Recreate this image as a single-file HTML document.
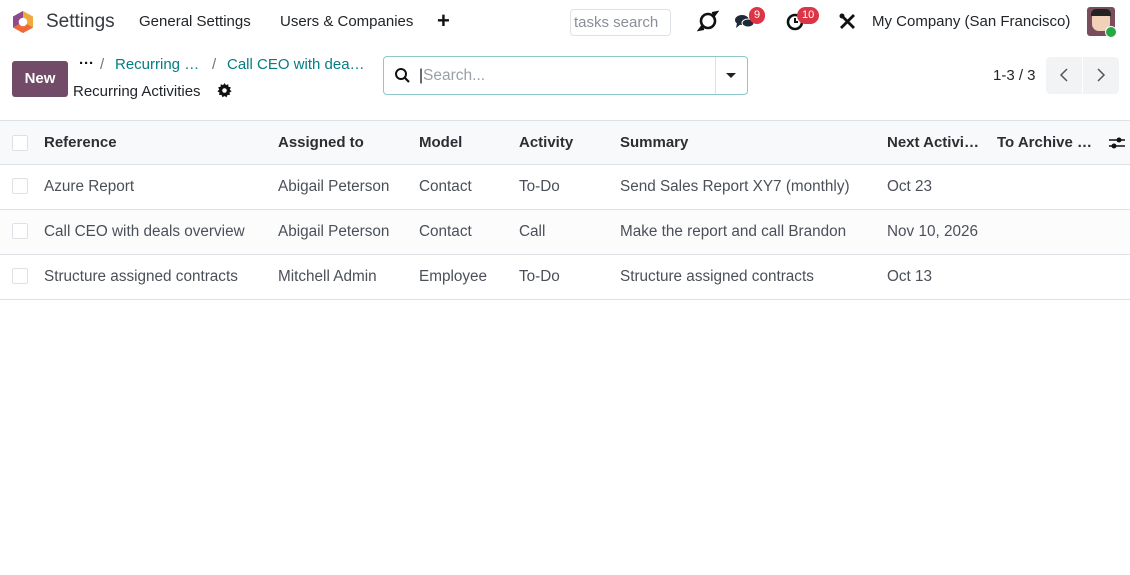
<!DOCTYPE html>
<html><head><meta charset="utf-8"><style>
*{box-sizing:border-box;margin:0;padding:0}
body{width:1130px;height:575px;background:#fff;font-family:"Liberation Sans",sans-serif;color:#374151;position:relative;overflow:hidden;font-size:15px}
.a{position:absolute;white-space:nowrap}
.nav{color:#212529;font-size:15px}
.badge{position:absolute;background:#dc3545;color:#fff;font-size:11px;border-radius:9px;height:17px;line-height:17px;text-align:center;padding:0 5px}
.hdr{position:absolute;left:0;top:120px;width:1130px;height:45px;background:#f8f9fa;border-top:1px solid #dee2e6;border-bottom:1px solid #dee2e6}
.row{position:absolute;left:0;width:1130px;height:45px;border-bottom:1px solid #dee2e6}
.cb{position:absolute;left:12px;width:16px;height:16px;border:1px solid #dee2e6;border-radius:2px;background:#fff}
.c{position:absolute;top:13px;white-space:nowrap;color:#4b5058;font-size:15.3px}
.h{font-weight:bold;color:#2b2f33;font-size:15px}
.teal{color:#017e84}
</style></head><body>
<svg class="a" style="left:11px;top:10px" width="24" height="24" viewBox="0 0 24 24"><polygon points="12,1 22,6.5 22,17.5 12,23 2,17.5 2,6.5" fill="#f0a93b"/><polygon points="12,1 2,6.5 2,17.5 12,12" fill="#8d4a8e"/><polygon points="2,17.5 12,23 22,17.5 12,12" fill="#ef6a3a"/><circle cx="12" cy="12" r="4.3" fill="#fff"/></svg>
<div class="a" style="left:46px;top:11px;font-size:19px;color:#343a40">Settings</div>
<div class="a nav" style="left:139px;top:13px">General Settings</div>
<div class="a nav" style="left:280px;top:13px">Users &amp; Companies</div>
<div class="a" style="left:437px;top:8px;font-size:22px;font-weight:bold;color:#111">+</div>
<div class="a" style="left:570px;top:9px;width:101px;height:27px;border:1px solid #dee2e6;border-radius:4px;color:#8a8f96;font-size:15px;padding:4px 3px">tasks search</div>
<svg class="a" style="left:697px;top:10px" width="22" height="22" viewBox="0 0 22 22"><circle cx="11" cy="11" r="7" fill="none" stroke="#111" stroke-width="2.6"/><path d="M15 3 L20 2 L17 6 M7 19 L2 20 L5 16" stroke="#111" stroke-width="2" fill="#111"/></svg>
<svg class="a" style="left:734px;top:13px" width="22" height="18" viewBox="0 0 22 18"><ellipse cx="8" cy="7" rx="7" ry="5" fill="#1f2937"/><path d="M3 10 L2 15 L7 11Z" fill="#1f2937"/><ellipse cx="14" cy="10" rx="6" ry="4" fill="#1f2937" stroke="#fff" stroke-width="1"/></svg>
<div class="badge" style="left:749px;top:7px">9</div>
<svg class="a" style="left:785px;top:12px" width="20" height="20" viewBox="0 0 20 20"><circle cx="10" cy="10" r="7" fill="none" stroke="#111" stroke-width="2.6"/><path d="M10 6 V10 H13" stroke="#111" stroke-width="2" fill="none"/></svg>
<div class="badge" style="left:797px;top:7px">10</div>
<svg class="a" style="left:838px;top:12px" width="19" height="19" viewBox="0 0 19 19"><path d="M3 3 L16 16 M16 3 L3 16" stroke="#111" stroke-width="2.8"/><circle cx="4" cy="4" r="2.5" fill="#111"/></svg>
<div class="a nav" style="left:872px;top:13px">My Company (San Francisco)</div>
<div class="a" style="left:1087px;top:7px;width:28px;height:29px;background:#7a4d5c;border-radius:3px;overflow:hidden"><div style="position:absolute;left:5px;top:4px;width:18px;height:20px;background:#f1d1b8;border-radius:7px"></div><div style="position:absolute;left:4px;top:2px;width:20px;height:7px;background:#222;border-radius:5px 5px 0 0"></div></div>
<div class="a" style="left:1105px;top:26px;width:12px;height:12px;background:#28a745;border-radius:50%;border:1px solid #fff"></div>
<div class="a" style="left:12px;top:61px;width:56px;height:36px;background:#714b67;border-radius:3px;color:#fff;font-weight:bold;font-size:15px;text-align:center;line-height:36px">New</div>
<div class="a" style="left:79px;top:55px;font-weight:bold;color:#111">···</div>
<div class="a" style="left:100px;top:56px;color:#6c757d">/</div>
<div class="a teal" style="left:115px;top:56px">Recurring …</div>
<div class="a" style="left:212px;top:56px;color:#6c757d">/</div>
<div class="a teal" style="left:227px;top:56px">Call CEO with dea…</div>
<div class="a" style="left:73px;top:83px;color:#212529">Recurring Activities</div>
<svg class="a" style="left:217px;top:83px" width="15" height="15" viewBox="0 0 16 16"><path d="M8 0 L9.5 2.2 L12 1.3 L12.2 4 L14.8 4.6 L13.6 7 L15.6 8.8 L13.3 10.2 L13.8 12.8 L11.2 12.7 L10.2 15.2 L8 13.8 L5.8 15.2 L4.8 12.7 L2.2 12.8 L2.7 10.2 L0.4 8.8 L2.4 7 L1.2 4.6 L3.8 4 L4 1.3 L6.5 2.2Z" fill="#111"/><circle cx="8" cy="8" r="2.4" fill="#fff"/></svg>
<div class="a" style="left:383px;top:56px;width:365px;height:39px;border:1px solid #8fc6ca;border-radius:4px"></div>
<svg class="a" style="left:394px;top:67px" width="17" height="17" viewBox="0 0 17 17"><circle cx="7" cy="7" r="5" fill="none" stroke="#111" stroke-width="2"/><path d="M11 11 L15 15" stroke="#111" stroke-width="2.2"/></svg>
<div class="a" style="left:419px;top:67px;color:#9aa0a6;font-size:15.5px"><span style="color:#111">|</span>Search...</div>
<div class="a" style="left:715px;top:57px;width:1px;height:37px;background:#dee2e6"></div>
<div class="a" style="left:726px;top:73px;width:0;height:0;border-left:5px solid transparent;border-right:5px solid transparent;border-top:5px solid #222"></div>
<div class="a" style="left:993px;top:67px;color:#212529">1-3 / 3</div>
<div class="a" style="left:1046px;top:57px;width:73px;height:37px;background:#f1f3f5;border-radius:4px"></div>
<div class="a" style="left:1082px;top:57px;width:1px;height:37px;background:#fff"></div>
<svg class="a" style="left:1057px;top:67px" width="14" height="16"><path d="M10 2 L4 8 L10 14" stroke="#555" stroke-width="1.5" fill="none"/></svg>
<svg class="a" style="left:1094px;top:67px" width="14" height="16"><path d="M4 2 L10 8 L4 14" stroke="#555" stroke-width="1.5" fill="none"/></svg>
<div class="hdr"><div class="cb" style="top:14px"></div>
<div class="c h" style="left:44px">Reference</div><div class="c h" style="left:278px">Assigned to</div><div class="c h" style="left:419px">Model</div><div class="c h" style="left:519px">Activity</div><div class="c h" style="left:620px">Summary</div><div class="c h" style="left:887px">Next Activi…</div><div class="c h" style="left:997px">To Archive …</div>
<svg style="position:absolute;left:1108px;top:14px" width="18" height="16"><path d="M1 5 H17 M1 11 H17" stroke="#111" stroke-width="1.6"/><circle cx="11" cy="5" r="2.5" fill="#111"/><circle cx="6" cy="11" r="2.5" fill="#111"/></svg></div>
<div class="row" style="top:165px"><div class="cb" style="top:13px"></div><div class="c" style="left:44px">Azure Report</div><div class="c" style="left:278px">Abigail Peterson</div><div class="c" style="left:419px">Contact</div><div class="c" style="left:519px">To-Do</div><div class="c" style="left:620px">Send Sales Report XY7 (monthly)</div><div class="c" style="left:887px">Oct 23</div></div>
<div class="row" style="top:210px;background:#fcfcfd"><div class="cb" style="top:13px"></div><div class="c" style="left:44px">Call CEO with deals overview</div><div class="c" style="left:278px">Abigail Peterson</div><div class="c" style="left:419px">Contact</div><div class="c" style="left:519px">Call</div><div class="c" style="left:620px">Make the report and call Brandon</div><div class="c" style="left:887px">Nov 10, 2026</div></div>
<div class="row" style="top:255px"><div class="cb" style="top:13px"></div><div class="c" style="left:44px">Structure assigned contracts</div><div class="c" style="left:278px">Mitchell Admin</div><div class="c" style="left:419px">Employee</div><div class="c" style="left:519px">To-Do</div><div class="c" style="left:620px">Structure assigned contracts</div><div class="c" style="left:887px">Oct 13</div></div>
</body></html>
